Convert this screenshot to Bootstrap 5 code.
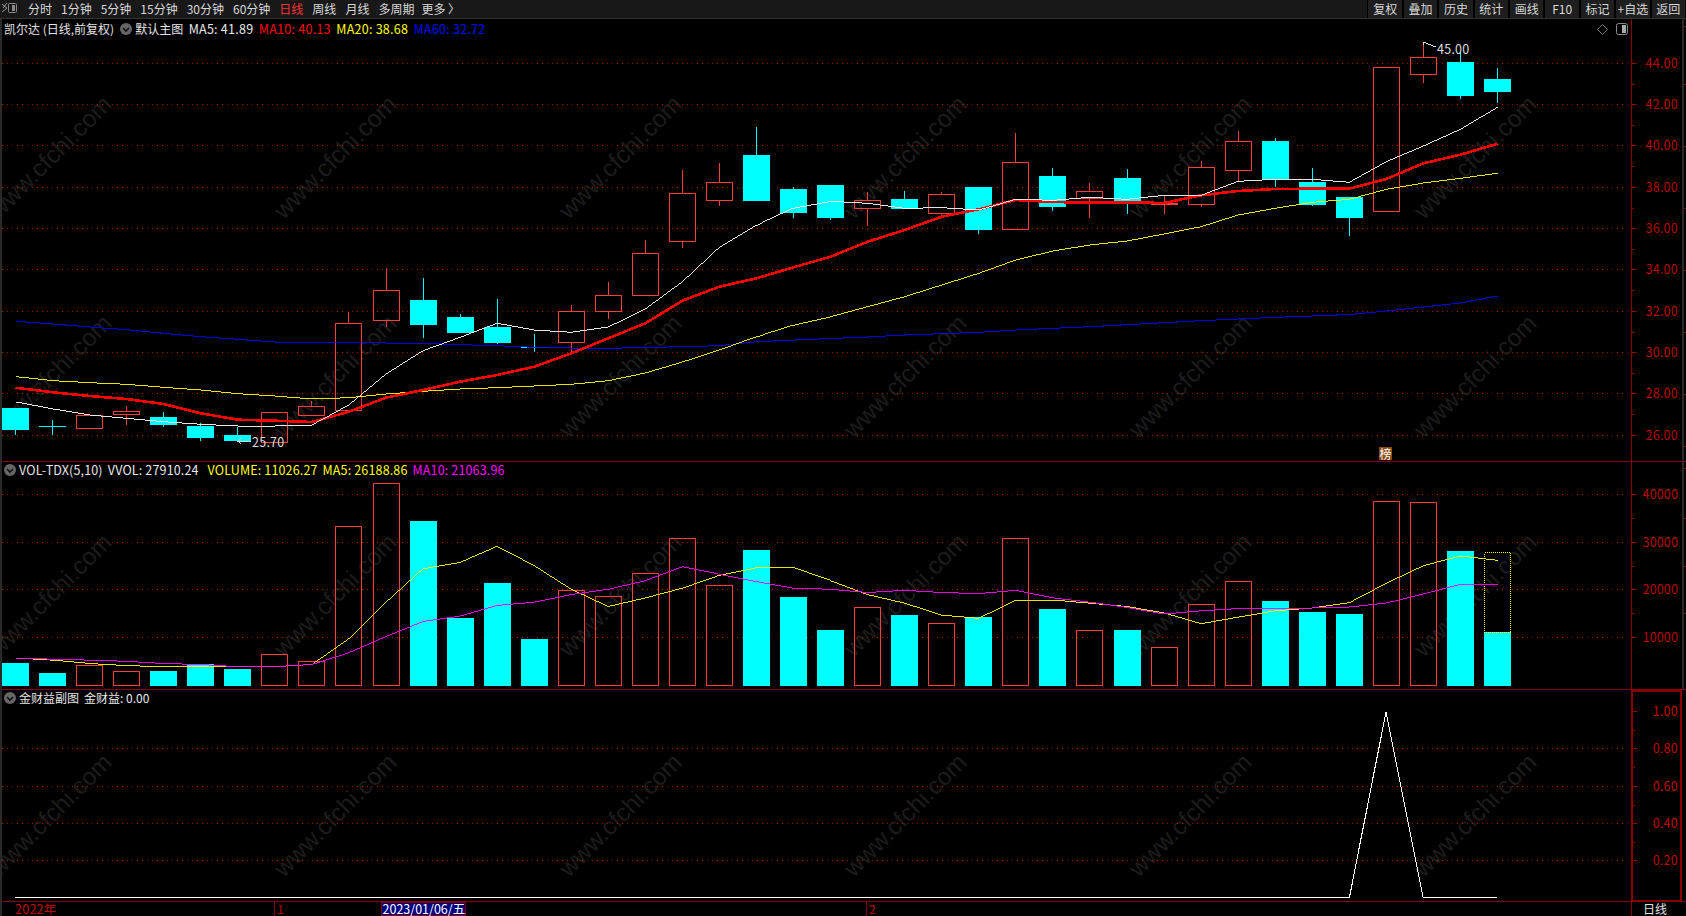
<!doctype html>
<html lang="zh-CN">
<head>
<meta charset="utf-8">
<title>凯尔达 日线</title>
<link href="https://cdn.jsdelivr.net/npm/bootstrap@5.3.0/dist/css/bootstrap.min.css" rel="stylesheet">
<style>
html,body{height:100%;margin:0;background:#000;overflow:hidden}
body,.stk-page,svg text{font-family:"Noto Sans CJK SC","Liberation Sans",sans-serif;font-size:12px}
svg text.stk-num,.stk-num{font-size:12.5px;letter-spacing:.25px}
.stk-page{width:1686px;height:916px;color:#e4e4e4;border-left:2px solid #2a2a2a}
.stk-toolbar{height:19px;background:#181818;border-bottom:1px solid #333;line-height:16px;margin-left:-2px}
.stk-periods{gap:9px;margin-left:10px;color:#d8d8d8}
.stk-periods .stk-on{color:#ff3232}
.stk-periods .stk-more{margin-left:-2px}
.stk-logo{width:18px;height:18px}
.stk-tool{width:35.4px;height:18px;padding:0;border:0;border-left:1px solid #000;border-right:1px solid #000;border-radius:0;background:#1e1e1e;color:#d8d8d8;font-size:12px;line-height:16px;--bs-btn-hover-bg:#1e1e1e}
.stk-pane{border-bottom:1px solid #8a0000}
.stk-plot{width:1629px}
.stk-plot svg,.stk-axis svg,.stk-foot svg{display:block}
.stk-axis{width:55px}
.stk-main{height:443px}
.stk-vol{height:228px}
.stk-sub{height:212px}
.stk-legend{left:2px;gap:5px;white-space:nowrap;line-height:15px}
.stk-main .stk-legend{top:2px;gap:5.5px}
.stk-vol .stk-legend{top:0}
.stk-sub .stk-legend{top:0}
.stk-vol .stk-num{letter-spacing:.15px}
.stk-chev{width:12px;height:12px}
.stk-tight{margin-left:-2px}
.stk-wide{margin-left:4px}
.stk-white{color:#eaeaea}
.stk-red{color:#ff0000}
.stk-yellow{color:#ffff00}
.stk-blue{color:#0000ff}
.stk-magenta{color:#ff00ff}
.stk-marks{right:3px;top:4px;gap:8px}
.stk-foot{height:14px;position:relative}
.stk-foot-r{width:55px;color:#e4e4e4;line-height:13px;padding-left:11px;border-left:1px solid #8a0000}
.stk-foot-l{width:1629px}
.stk-badge{left:1377px;top:428px;width:13px;height:13px;background:#8a4a12;color:#fff;font-size:12px;line-height:13px;text-align:center}
</style>
</head>
<body>
<div class="stk-page d-flex flex-column">
  <div class="stk-toolbar d-flex align-items-center justify-content-between">
    <div class="d-flex align-items-center">
      <svg class="stk-logo" viewBox="0 0 18 18"><path d="M2 4l5 4-5 4M7 3L3 8" fill="none" stroke="#999"/><rect x="8.500" y="3.500" width="8" height="9" rx="1" fill="none" stroke="#888"/><rect x="12" y="5" width="3" height="6" fill="#888"/></svg>
      <div class="stk-periods d-flex">
        <span>分时</span><span>1分钟</span><span>5分钟</span><span>15分钟</span><span>30分钟</span><span>60分钟</span><span class="stk-on">日线</span><span>周线</span><span>月线</span><span>多周期</span><span class="stk-more">更多 〉</span>
      </div>
    </div>
    <div class="d-flex">
      <button class="btn stk-tool">复权</button><button class="btn stk-tool">叠加</button><button class="btn stk-tool">历史</button><button class="btn stk-tool">统计</button><button class="btn stk-tool">画线</button><button class="btn stk-tool">F10</button><button class="btn stk-tool">标记</button><button class="btn stk-tool">+自选</button><button class="btn stk-tool">返回</button>
    </div>
  </div>

  <div class="stk-pane stk-main d-flex position-relative">
    <div class="stk-plot position-relative">
      <svg id="p1" width="1629" height="442" viewBox="2 19 1629 442" shape-rendering="crispEdges"></svg>
      <div class="stk-legend position-absolute d-flex align-items-center">
        <span>凯尔达 (日线,前复权)</span>
        <svg class="stk-chev" viewBox="0 0 12 12"><circle cx="6" cy="6" r="6" fill="#666"/><path d="M3 5l3 3 3-3" fill="none" stroke="#111" stroke-width="1.6"/></svg>
        <span class="stk-tight">默认主图</span>
        <span class="stk-white stk-num">MA5: 41.89</span>
        <span class="stk-red stk-num">MA10: 40.13</span>
        <span class="stk-yellow stk-num">MA20: 38.68</span>
        <span class="stk-blue stk-num">MA60: 32.72</span>
      </div>
      <div class="stk-marks position-absolute d-flex align-items-center">
        <svg width="11" height="11" viewBox="0 0 11 11"><path d="M5.500 .5l5 5-5 5-5-5z" fill="none" stroke="#777"/></svg>
        <svg width="12" height="12" viewBox="0 0 12 12"><rect x=".5" y=".5" width="11" height="11" rx="2" fill="none" stroke="#888"/><rect x="6" y="2" width="4" height="8" fill="#aaa"/></svg>
      </div>
      <div class="stk-badge position-absolute">榜</div>
    </div>
    <div class="stk-axis"><svg id="a1" width="55" height="442" viewBox="1631 19 55 442" shape-rendering="crispEdges"></svg></div>
  </div>

  <div class="stk-pane stk-vol d-flex position-relative">
    <div class="stk-plot position-relative">
      <svg id="p2" width="1629" height="227" viewBox="2 462 1629 227" shape-rendering="crispEdges"></svg>
      <div class="stk-legend position-absolute d-flex align-items-center">
        <svg class="stk-chev" viewBox="0 0 12 12"><circle cx="6" cy="6" r="6" fill="#666"/><path d="M3 5l3 3 3-3" fill="none" stroke="#111" stroke-width="1.6"/></svg>
        <span class="stk-tight stk-num">VOL-TDX(5,10)</span>
        <span class="stk-white stk-num">VVOL: 27910.24</span>
        <span class="stk-yellow stk-num stk-wide">VOLUME: 11026.27</span>
        <span class="stk-yellow stk-num">MA5: 26188.86</span>
        <span class="stk-magenta stk-num">MA10: 21063.96</span>
      </div>
    </div>
    <div class="stk-axis"><svg id="a2" width="55" height="227" viewBox="1631 462 55 227" shape-rendering="crispEdges"></svg></div>
  </div>

  <div class="stk-pane stk-sub d-flex position-relative">
    <div class="stk-plot position-relative">
      <svg id="p3" width="1629" height="211" viewBox="2 690 1629 211" shape-rendering="crispEdges"></svg>
      <div class="stk-legend position-absolute d-flex align-items-center">
        <svg class="stk-chev" viewBox="0 0 12 12"><circle cx="6" cy="6" r="6" fill="#666"/><path d="M3 5l3 3 3-3" fill="none" stroke="#111" stroke-width="1.6"/></svg>
        <span class="stk-tight">金财益副图</span>
        <span class="stk-white">金财益: 0.00</span>
      </div>
    </div>
    <div class="stk-axis"><svg id="a3" width="55" height="211" viewBox="1631 690 55 211" shape-rendering="crispEdges"></svg></div>
  </div>

  <div class="stk-foot d-flex">
    <div class="stk-foot-l"><svg id="p4" width="1629" height="14" viewBox="2 902 1629 14"></svg></div>
    <div class="stk-foot-r">日线</div>
  </div>
</div>
<script>
var RED='#ff3c3c',CY='#00ffff',GRID='#a00000',AX='#8a0000',LBL='#b80000';
function X(i){return 15.5+37.05*i;}
function L(i){return Math.round(X(i)-13.5);}
function line(a,b,c,d,col,extra){return '<line x1="'+a+'" y1="'+b+'" x2="'+c+'" y2="'+d+'" stroke="'+col+'" '+(extra||'')+'/>';}
function grid(ys){return ys.map(function(y){y=Math.round(y)+.5;return line(2,y,1631,y,GRID,'stroke-dasharray="1 4"');}).join('');}
function wm(ys){var s='';ys.forEach(function(y){[50,335,620,905,1190,1475].forEach(function(x){s+='<text x="'+x+'" y="'+y+'" text-anchor="middle" dominant-baseline="central" transform="rotate(-45 '+x+' '+y+')" style="font:24.5px \'Liberation Sans\',sans-serif" fill="#1c1c1c" shape-rendering="auto">www.cfchi.com</text>';});});return s;}
function poly(ys,col,w){var p=ys.map(function(y,i){return X(i).toFixed(1)+','+y.toFixed(1);}).join(' ');return '<polyline points="'+p+'" fill="none" stroke="'+col+'" stroke-width="'+w+'"/>';}
function label(x,y,t,col){return '<text class="stk-num" x="'+x+'" y="'+(y-1.5)+'" text-anchor="end" dominant-baseline="central" fill="'+(col||LBL)+'" shape-rendering="auto">'+t+'</text>';}
function sideTicks(ys){return ys.map(function(y){return line(1684,y+.5,1686,y+.5,AX);}).join('');}

/* candles: colour (r red, c cyan), body top, body bottom, high, low */
var C=[['c',408,430,408,435],['c',426,426,420,435],['r',415,428,415,428],['r',411,414,406,425],['c',417,425,412,427],['c',426,438,423,441],['c',435,441,427,441],['r',412,442,412,442],['r',406,415,401,415],['r',323,410,312,413],
['r',290,320,268,327],['c',300,325,278,338],['c',317,333,314,333],['c',327,343,299,344],['c',347,347,334,352],['r',311,342,305,352],['r',295,311,282,319],['r',253,295,240,295],['r',193,241,170,248],['r',182,200,163,206],
['c',155,201,127,201],['c',189,213,187,218],['c',185,218,185,220],['r',200,208,192,226],['c',199,209,191,209],['r',194,213,192,216],['c',187,230,187,234],['r',162,229,133,230],['c',176,207,168,211],['r',191,198,183,218],
['c',178,202,169,214],['r',203,204,195,214],['r',167,204,161,207],['r',141,170,131,181],['c',141,179,138,187],['c',182,205,168,206],['c',197,218,197,236],['r',67,211,67,211],['r',57,74,42,83],['c',62,96,52,99],['c',79,92,68,103]];
var W5=[402,409,415,418.3,421.7,424.3,426,426,425,405,374,350.7,337.3,323.3,330,332.3,327,309,281.7,247.3,225,208,201.3,203.3,208.3,207.7,210,199.3,200.3,197.3,199.3,195.3,195.3,181.3,179.3,179.3,182.3,161.7,146,129.3,107.3];
var R10=[387.7,392.3,396,399,404,413.3,419.7,420.7,422,411.7,397.7,390,381.7,375,366.7,353.3,338.3,323.3,300.7,286.7,278.3,267.3,256.7,241.7,230,216.7,209.3,200,202,202.7,202.3,203,195.3,191,189,188.7,188.7,179,163.3,154.7,143.7];
var Y20=[376.7,380.7,382.7,384.3,387.3,390,393.7,396,399,397.7,394,391.3,389,387.7,386,384.3,380.7,373,362,350,336.7,325,316.7,306.7,296.7,285,273.3,260,251,245,241,234,226.7,215,208.3,202.3,199.3,189.3,183,178.3,173.3];
var B60=[321.3,324,327,329.7,333.3,336.7,339.3,342,342.3,342.3,343,343.3,344.7,345.7,347.3,348,348.3,347.5,346.7,345.7,341.7,340,338.5,337,335,333.7,332.3,330,328.3,326.7,324.7,322.7,320.7,319,317.3,316,314.5,311,307,303,296];

var s=wm([157,376])+grid([63,104,145,187,228,269,311,352,393,435]);
C.forEach(function(c,i){
  var l=L(i),m=l+13.5,col=c[0]=='r'?RED:CY;
  if(c[3]<c[1])s+=line(m,c[3],m,c[1],col);
  if(c[4]>c[2])s+=line(m,c[2],m,c[4],col);
  if(c[0]=='c'){
    if(c[2]-c[1]<1)s+=line(l,c[1]+.5,l+27,c[1]+.5,col);
    else s+='<rect x="'+l+'" y="'+c[1]+'" width="27" height="'+(c[2]-c[1])+'" fill="'+col+'"/>';
  }else s+='<rect x="'+(l+.5)+'" y="'+(c[1]+.5)+'" width="26" height="'+(c[2]-c[1])+'" fill="none" stroke="'+col+'"/>';
});
s+=poly(B60,'#0000ff',.9)+poly(Y20,'#ffff00',.9)+poly(R10,'#ff0000',2.6)+poly(W5,'#ffffff',.9);
s+='<polyline points="1423,45 1423,42 1426,42 1423,42 1436,47" fill="none" stroke="#ddd"/>';
s+='<text class="stk-num" x="1437" y="48" dominant-baseline="central" fill="#dedede" shape-rendering="auto">45.00</text>';
s+='<polyline points="251,441 238,441 241,438 238,441 241,444" fill="none" stroke="#ddd"/>';
s+='<text class="stk-num" x="252" y="441.5" dominant-baseline="central" fill="#dedede" shape-rendering="auto">25.70</text>';
document.getElementById('p1').innerHTML=s;

var a1=line(1631.5,19,1631.5,461,AX);
var gy=[63,104,145,187,228,269,311,352,393,435];
['44.00','42.00','40.00','38.00','36.00','34.00','32.00','30.00','28.00','26.00'].forEach(function(t,i){
  var y=gy[i];
  a1+=line(1631,y+.5,1637,y+.5,AX)+label(1678,y+.5,t);
  if(i<9)a1+=line(1631,y+21.5,1634,y+21.5,AX);
});
a1+='<rect x="1682" y="19" width="2" height="442" fill="#2a2a2a"/>'+sideTicks([26,84,146,208,270,332,394,446]);
document.getElementById('a1').innerHTML=a1;

/* volume */
var V=[663,673,665,671,671,664,669,654,661,526,483,521,618,583,639,590,596,573,538,585,550,597,630,607,615,623,617,538,609,630,630,647,604,581,601,612,614,501,502,551,632];
var VC=['c','c','r','r','c','c','c','r','r','r','r','c','c','c','c','r','r','r','r','r','c','c','c','r','c','r','c','r','c','r','c','r','r','r','c','c','c','r','r','c','c'];
var s2=wm([595])+grid([494,542,589,637]);
V.forEach(function(t,i){
  var l=L(i);
  if(VC[i]=='c')s2+='<rect x="'+l+'" y="'+t+'" width="27" height="'+(686-t)+'" fill="'+CY+'"/>';
  else s2+='<rect x="'+(l+.5)+'" y="'+(t+.5)+'" width="26" height="'+(685-t)+'" fill="none" stroke="'+RED+'"/>';
});
var l40=L(40);
s2+='<rect x="'+(l40+.5)+'" y="552.5" width="26" height="80" fill="none" stroke="#ffff00" stroke-dasharray="1 1"/>';
function sc(a){return a.map(function(v){return v*1.0753;});}
var VY=sc([612,614,617,619,620,620,620,620,618,594,560,529,523,508,526,548,564,556,547,535,528,528,540,553,561,572,575,558,558,561,564,570,580,574,568]).concat([608,602.7,583.3,565.7,556,560.3]);
var VM=sc([612,613,614,615,617,618,620,620,618,607,592,578,573,563,560,553,548,540,527,534,541,547,548,551,549,551,552,549,556,560,565,571,568,566,566]).concat([608,607,603,594,584.3,584.3]);
s2+=poly(VY,'#ffff00',.9)+poly(VM,'#ff00ff',.9);
document.getElementById('p2').innerHTML=s2;
var a2=line(1631.5,462,1631.5,689,AX);
['40000','30000','20000','10000'].forEach(function(t,i){
  var y=[494,542,589,637][i];
  a2+=line(1631,y+.5,1637,y+.5,AX)+label(1678,y+.5,t);
  if(i<3)a2+=line(1631,y+24.5,1634,y+24.5,AX);
});
a2+='<rect x="1682" y="462" width="2" height="227" fill="#2a2a2a"/>'+sideTicks([468,518,566,613]);
document.getElementById('a2').innerHTML=a2;

/* sub chart */
var s3=wm([815])+grid([748,786,823,860]);
s3+='<polyline points="1349.5,897 1386,712 1423,897" fill="none" stroke="#fff" stroke-width="1.1"/><polyline points="15,897.5 1349.5,897.5" fill="none" stroke="#fff" stroke-width="1.5"/><polyline points="1423,897.5 1497,897.5" fill="none" stroke="#fff" stroke-width="1.5"/>';
document.getElementById('p3').innerHTML=s3;
var a3='<rect x="1632" y="691" width="49" height="210" fill="none" stroke="#8a0000" stroke-width="2"/>';
['1.00','0.80','0.60','0.40','0.20'].forEach(function(t,i){
  var y=[711,748,786,823,860][i];
  a3+=line(1632,y+.5,1637,y+.5,AX)+label(1678,y+.5,t,'#c00000');
  if(i<4)a3+=line(1632,y+19.5,1635,y+19.5,AX);
});
document.getElementById('a3').innerHTML=a3;

/* time axis */
var s4='<text class="stk-num" x="15" y="908" dominant-baseline="central" fill="#c00000">2022年</text>';
s4+='<line x1="274.5" y1="902" x2="274.5" y2="916" stroke="#8a0000"/><text x="277" y="908" dominant-baseline="central" fill="#c00000">1</text>';
s4+='<rect x="381.5" y="902.5" width="84" height="13" fill="#000080" stroke="#8a0000"/><text x="382.5" y="908" dominant-baseline="central" fill="#fff" class="stk-num" style="letter-spacing:0">2023/01/06/五</text>';
s4+='<line x1="866.5" y1="902" x2="866.5" y2="916" stroke="#8a0000"/><text x="869" y="908" dominant-baseline="central" fill="#c00000">2</text>';
document.getElementById('p4').innerHTML=s4;
</script>
<script src="https://cdn.jsdelivr.net/npm/bootstrap@5.3.0/dist/js/bootstrap.bundle.min.js"></script>
</body>
</html>
